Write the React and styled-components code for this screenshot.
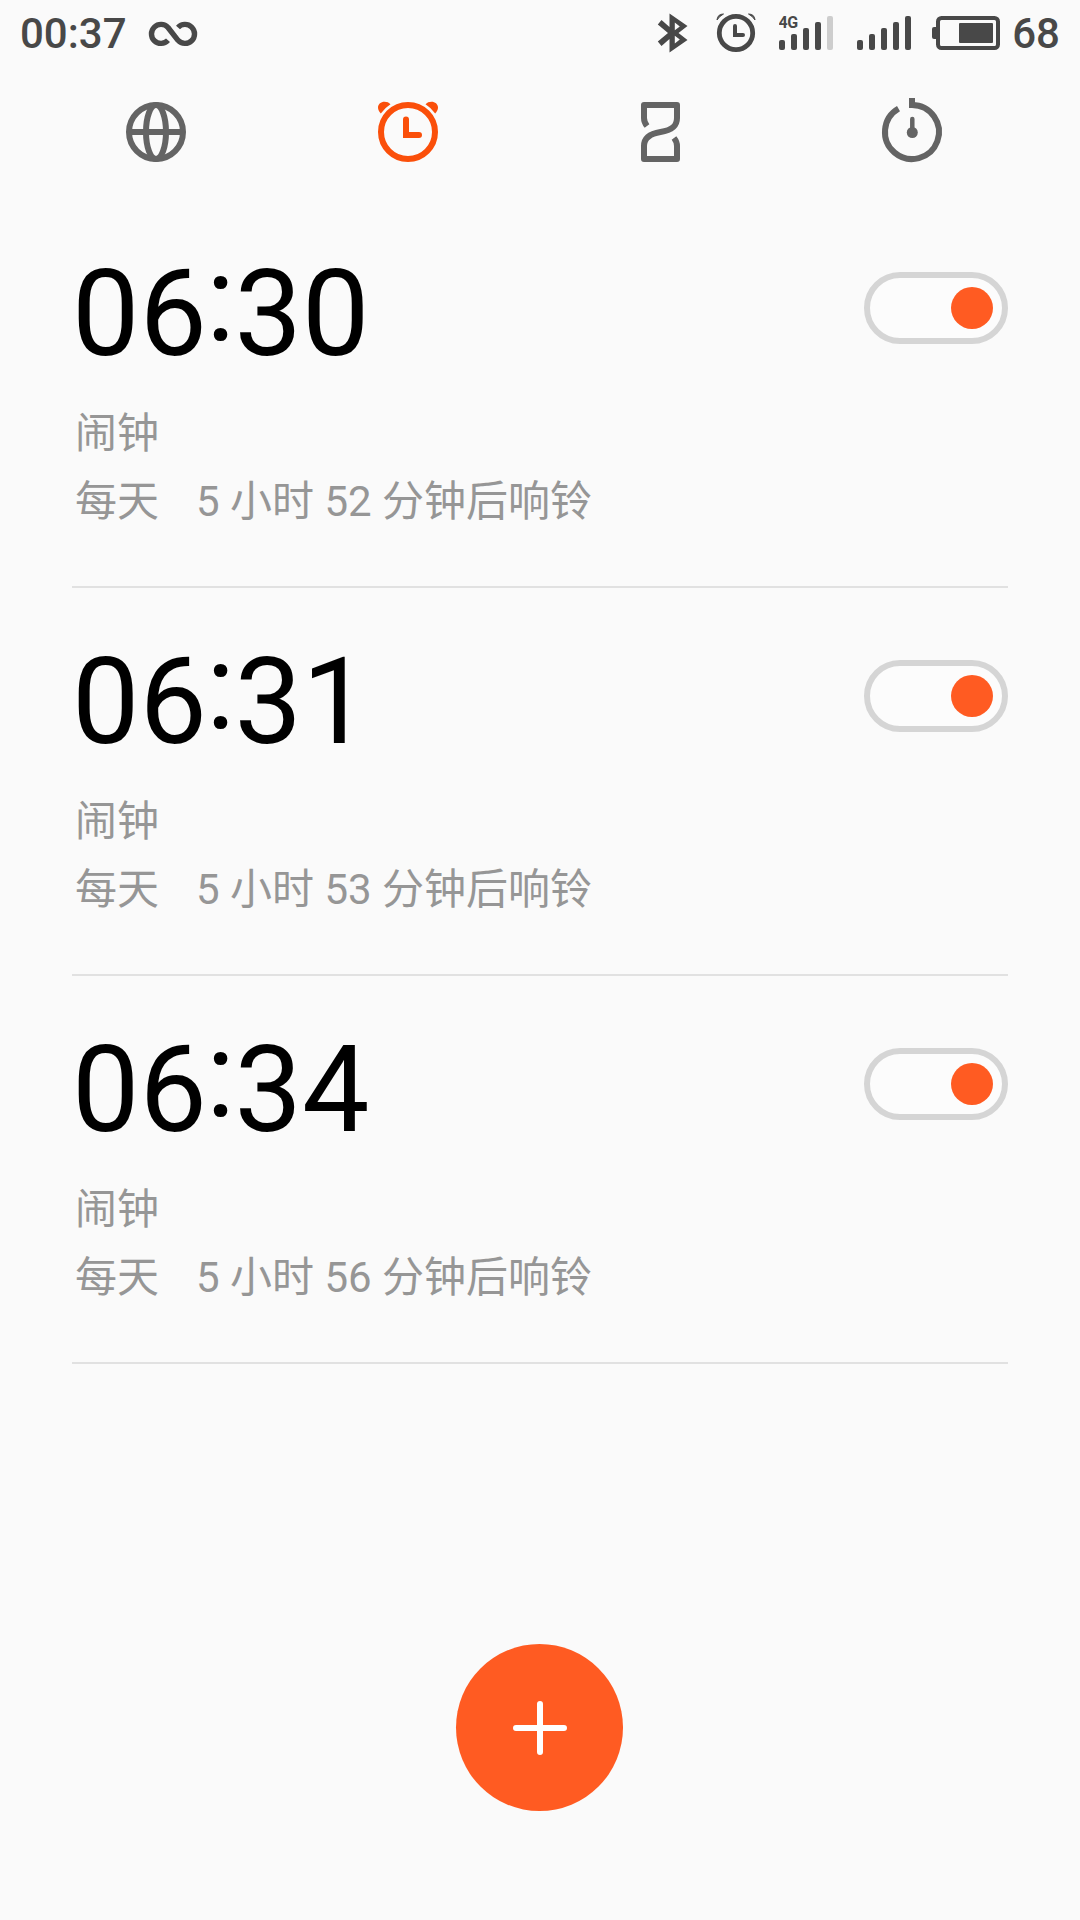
import React, { useState } from "react";
import styled, { createGlobalStyle } from "styled-components";

const GlobalStyle = createGlobalStyle`
  * { box-sizing: border-box; }
  body {
    margin: 0;
    background: #fafafa;
    font-family: Roboto, "Noto Sans CJK SC", sans-serif;
  }
`;

const initialAlarms = [
  { id: 1, hour: "06", minute: "30", left: "5 小时 52 分钟后响铃", on: true },
  { id: 2, hour: "06", minute: "31", left: "5 小时 53 分钟后响铃", on: true },
  { id: 3, hour: "06", minute: "34", left: "5 小时 56 分钟后响铃", on: true },
];

const barTops = [40, 34, 28, 22, 16];

const InfinityIcon = () => (
  <StatusIcon width="50" height="66" gap={21}>
    <path
      d="M20 40.3A9.5 9.5 0 1 1 20 27.5L30 40.3A9.5 9.5 0 1 0 30 27.5"
      fill="none"
      stroke="currentColor"
      strokeWidth="5.4"
      strokeLinejoin="round"
    />
  </StatusIcon>
);

const BluetoothIcon = () => (
  <StatusIcon width="31" height="66">
    <path
      d="M12.5 13.5L30.5 26L21.5 33L30.5 40L12.5 52.5V39L4.5 46L0.8 41.5L11 33L0.8 24.5L4.5 20L12.5 27Z
        M17.8 22.5L22.8 26.4L17.8 30.2Z M17.8 35.8L22.8 39.6L17.8 43.5Z"
      fill="currentColor"
      fillRule="evenodd"
    />
  </StatusIcon>
);

const SmallAlarmIcon = () => (
  <StatusIcon width="40" height="66" gap={28}>
    <g fill="none" stroke="currentColor">
      <circle cx="20" cy="33" r="16.7" strokeWidth="4.8" />
      <path d="M19 26V35H27" strokeWidth="4" strokeLinecap="round" />
    </g>
    <path d="M1 20Q1.5 14 7.5 14Q3.5 16 1 20Z" fill="currentColor" stroke="currentColor" />
    <path d="M39 20Q38.5 14 32.5 14Q36.5 16 39 20Z" fill="currentColor" stroke="currentColor" />
  </StatusIcon>
);

const Signal = ({ label, level, gap }) => (
  <StatusIcon width="54" height="66" gap={gap}>
    {label && <NetworkLabel x="-0.5" y="28">{label}</NetworkLabel>}
    {barTops.map((top, i) => (
      <rect
        key={top}
        x={i * 12}
        y={top}
        width="6"
        height={50 - top}
        rx="2"
        fill={i < level ? "currentColor" : "#cdcdcd"}
      />
    ))}
  </StatusIcon>
);

const BatteryIcon = () => (
  <StatusIcon width="68" height="66" gap={21}>
    <rect x="6" y="18" width="60" height="30" rx="3.5" fill="none" stroke="currentColor" strokeWidth="4" />
    <path d="M4 27H2Q0 27 0 29V37Q0 39 2 39H4Z" fill="currentColor" />
    <rect x="27" y="23" width="34" height="20" rx="1" fill="currentColor" />
  </StatusIcon>
);

const GlobeIcon = () => (
  <TabIcon>
    <circle cx="45" cy="47" r="27" />
    <ellipse cx="45" cy="47" rx="10" ry="27" />
    <path d="M18 47H72" />
  </TabIcon>
);

const AlarmIcon = () => (
  <TabIcon>
    <circle cx="45" cy="47" r="27" />
    <path d="M43 34.5V50H56" strokeLinecap="round" />
    <path d="M40 48V53H45V48Z" fill="currentColor" stroke="none" />
    <path
      d="M17.8 28.5C16 26.5 15 24.5 15 22.5C15 19 18 16.7 21.5 16.7C24 16.7 26 17.5 27.5 19.2A34 34 0 0 0 17.8 28.5Z"
      fill="currentColor"
      stroke="none"
    />
    <path
      d="M72.2 28.5C74 26.5 75 24.5 75 22.5C75 19 72 16.7 68.5 16.7C66 16.7 64 17.5 62.5 19.2A34 34 0 0 1 72.2 28.5Z"
      fill="currentColor"
      stroke="none"
    />
  </TabIcon>
);

const HourglassIcon = () => (
  <TabIcon>
    <path
      d="M32 41C30 38.5 29 36 29 33V20H62V33C62 41 57 45.3 45.5 47C35 48.7 29 53 29 61V74H62V61C62 58 61 55.5 59 53"
      strokeLinejoin="round"
    />
  </TabIcon>
);

const TimerIcon = () => (
  <TabIcon>
    <path d="M45 20A27 27 0 1 1 31.5 23.6" />
    <path d="M45 13V23" />
    <path d="M45.3 34V46" strokeWidth="4.5" strokeLinecap="round" />
    <circle cx="45.3" cy="47.5" r="5.5" fill="currentColor" stroke="none" />
  </TabIcon>
);

const tabs = [
  { name: "world", Icon: GlobeIcon },
  { name: "alarm", Icon: AlarmIcon },
  { name: "timer", Icon: HourglassIcon },
  { name: "stopwatch", Icon: TimerIcon },
];

const AlarmRow = ({ alarm, onToggle }) => (
  <Row>
    <div>
      <Time>
        {alarm.hour}
        <Colon>:</Colon>
        {alarm.minute}
      </Time>
      <Detail>闹钟</Detail>
      <Detail>
        <span>每天</span>
        <span>{alarm.left}</span>
      </Detail>
    </div>
    <Switch on={alarm.on} onClick={() => onToggle(alarm.id)}>
      <Knob on={alarm.on} />
    </Switch>
  </Row>
);

const App = () => {
  const [active, setActive] = useState("alarm");
  const [alarms, setAlarms] = useState(initialAlarms);

  const toggle = (id) =>
    setAlarms(alarms.map((a) => (a.id === id ? { ...a, on: !a.on } : a)));

  return (
    <Screen>
      <GlobalStyle />
      <StatusBar>
        <StatusGroup>
          <StatusText>00:37</StatusText>
          <InfinityIcon />
        </StatusGroup>
        <StatusGroup>
          <BluetoothIcon />
          <SmallAlarmIcon />
          <Signal label="4G" level={4} gap={23} />
          <Signal level={5} gap={24} />
          <BatteryIcon />
          <StatusText gap={12}>68</StatusText>
        </StatusGroup>
      </StatusBar>

      <Tabs>
        {tabs.map(({ name, Icon }) => (
          <Tab key={name} $active={name === active} onClick={() => setActive(name)}>
            <Icon />
          </Tab>
        ))}
      </Tabs>

      <List>
        {alarms.map((alarm) => (
          <AlarmRow key={alarm.id} alarm={alarm} onToggle={toggle} />
        ))}
      </List>

      <Footer>
        <AddButton>
          <svg width="54" height="54" viewBox="0 0 54 54">
            <path d="M27 3V51M3 27H51" stroke="#fff" strokeWidth="6" strokeLinecap="round" />
          </svg>
        </AddButton>
      </Footer>
    </Screen>
  );
};

const Screen = styled.div`
  display: flex;
  flex-direction: column;
  width: 1080px;
  height: 1920px;
  background: #fafafa;
  overflow: hidden;
`;

const StatusBar = styled.div`
  display: flex;
  justify-content: space-between;
  height: 66px;
  padding: 0 20px;
  color: #484848;
`;

const StatusGroup = styled.div`
  display: flex;
  align-items: flex-start;
`;

const StatusText = styled.span.withConfig({ shouldForwardProp: (p) => p !== "gap" })`
  margin-left: ${(props) => props.gap || 0}px;
  font-size: 42px;
  font-weight: 500;
  line-height: 68px;
`;

const StatusIcon = styled.svg.withConfig({ shouldForwardProp: (p) => p !== "gap" })`
  display: block;
  flex-shrink: 0;
  margin-left: ${(props) => props.gap || 0}px;
`;

const NetworkLabel = styled.text`
  font-size: 16px;
  font-weight: 700;
  fill: currentColor;
  letter-spacing: -0.5px;
`;

const Tabs = styled.nav`
  display: grid;
  grid-template-columns: repeat(4, 252px);
  height: 134px;
  padding: 19px 30px 0;
`;

const Tab = styled.button`
  display: flex;
  justify-content: center;
  height: 90px;
  padding: 0;
  border: 0;
  background: none;
  color: ${(props) => (props.$active ? "#fa4f0a" : "#646464")};
`;

const TabIcon = styled.svg.attrs({ width: 90, height: 90, viewBox: "0 0 90 90" })`
  display: block;
  fill: none;
  stroke: currentColor;
  stroke-width: 6px;
`;

const List = styled.div`
  padding: 0 72px;
`;

const Row = styled.div`
  display: flex;
  justify-content: space-between;
  height: 388px;
  padding: 44px 0 0 3px;
  border-bottom: 2px solid #e1e1e1;
`;

const Time = styled.div`
  margin: 0 0 15px -3px;
  font-size: 120px;
  line-height: 141px;
  color: #000;
`;

const Colon = styled.span`
  position: relative;
  top: -15px;
  left: -1px;
  margin-right: -1.5px;
`;

const Detail = styled.div`
  display: flex;
  gap: 37px;
  font-size: 42px;
  line-height: 68px;
  color: #969696;
`;

const Switch = styled.button.withConfig({ shouldForwardProp: (p) => p !== "on" })`
  display: flex;
  align-items: center;
  justify-content: ${(props) => (props.on ? "flex-end" : "flex-start")};
  width: 144px;
  height: 72px;
  margin-top: 28px;
  padding: 0 9px;
  border: 6px solid #d5d5d5;
  border-radius: 36px;
  background: #fcfcfc;
`;

const Knob = styled.span.withConfig({ shouldForwardProp: (p) => p !== "on" })`
  width: 42px;
  height: 42px;
  border-radius: 50%;
  background: ${(props) => (props.on ? "#ff5b22" : "#c8c8c8")};
`;

const Footer = styled.div`
  display: flex;
  justify-content: center;
  margin-top: auto;
  padding: 0 1px 109px 0;
`;

const AddButton = styled.button`
  display: flex;
  align-items: center;
  justify-content: center;
  width: 167px;
  height: 167px;
  padding: 1px 0 0 1px;
  border: 0;
  border-radius: 50%;
  background: #ff5b22;
`;

export default App;
